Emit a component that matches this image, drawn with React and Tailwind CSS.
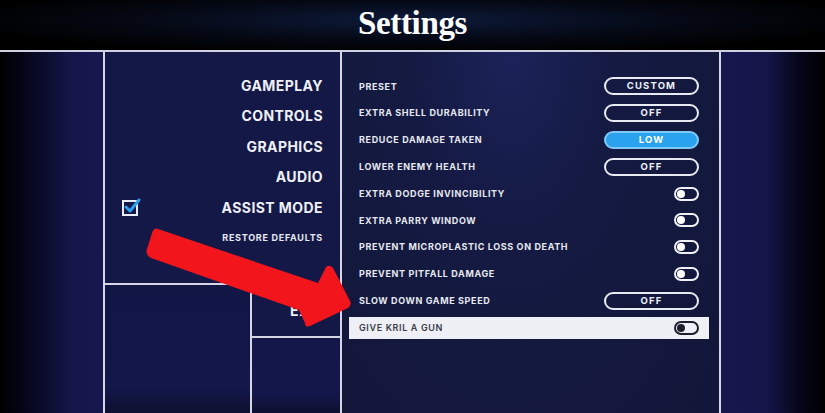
import { useState } from "react";

const rows = [
  { label: "PRESET", kind: "pill", value: "CUSTOM" },
  { label: "EXTRA SHELL DURABILITY", kind: "pill", value: "OFF" },
  { label: "REDUCE DAMAGE TAKEN", kind: "pill", value: "LOW", active: true },
  { label: "LOWER ENEMY HEALTH", kind: "pill", value: "OFF" },
  { label: "EXTRA DODGE INVINCIBILITY", kind: "toggle" },
  { label: "EXTRA PARRY WINDOW", kind: "toggle" },
  { label: "PREVENT MICROPLASTIC LOSS ON DEATH", kind: "toggle" },
  { label: "PREVENT PITFALL DAMAGE", kind: "toggle" },
  { label: "SLOW DOWN GAME SPEED", kind: "pill", value: "OFF" },
  { label: "GIVE KRIL A GUN", kind: "toggle", selected: true },
];

const menu = ["GAMEPLAY", "CONTROLS", "GRAPHICS", "AUDIO", "ASSIST MODE"];

const Pill = ({ value, active }) => (
  <div
    className={
      active
        ? "w-[95px] h-[18px] rounded-full border-2 border-[#7fcaf8] bg-[#2aa2ee] flex items-center justify-center text-[9.5px] font-bold tracking-[0.12em] text-white"
        : "w-[95px] h-[18px] rounded-full border-2 border-[#e9ebf2] flex items-center justify-center text-[9.5px] font-bold tracking-[0.12em] text-[#eef0f6]"
    }
  >
    {value}
  </div>
);

const Toggle = ({ dark }) => (
  <div
    className={
      dark
        ? "w-[25px] h-[14px] rounded-full border-2 border-[#1c1f2c] flex items-center px-[1px]"
        : "w-[25px] h-[14px] rounded-full border-2 border-[#eef0f6] flex items-center px-[1px]"
    }
  >
    <div className={dark ? "w-[8px] h-[8px] rounded-full bg-[#1c1f2c]" : "w-[8px] h-[8px] rounded-full bg-white"} />
  </div>
);

const CheckBox = () => (
  <svg width="22" height="22" viewBox="0 0 22 22">
    <rect x="3" y="5" width="14" height="14" fill="none" stroke="#e8ecf6" strokeWidth="2" />
    <path d="M6 11 L10 15 L19 4" fill="none" stroke="#2b9ff0" strokeWidth="3" strokeLinecap="round" strokeLinejoin="round" />
  </svg>
);

const Arrow = () => (
  <svg className="absolute left-0 top-0 pointer-events-none" width="825" height="413" viewBox="0 0 825 413">
    <path
      d="M158 229 L318 283 L326 267 Q330 264 333 268 L350 301 Q352 305 348 308 L310 326 Q305 328 305 323 L299 310 L151 258 Q145 255 147 249 L152 233 Q154 227 158 229 Z"
      fill="#f2151b"
    />
  </svg>
);

export default function App() {
  const [assist] = useState(true);

  return (
    <div className="relative w-[825px] h-[413px] overflow-hidden bg-black flex flex-col font-['Inter',sans-serif]">
      <header className="h-[52px] shrink-0 border-b-2 border-[#cfd1e0] flex items-center justify-center bg-[radial-gradient(ellipse_at_50%_40%,#0d1a3a_0%,#050915_45%,#000_80%)]">
        <h1 className="text-white text-[33px] font-bold leading-none -mt-[4px] font-['Liberation_Serif',serif] tracking-[-0.01em]">
          Settings
        </h1>
      </header>

      <div className="flex flex-1 min-h-0">
        <div className="w-[103px] bg-[linear-gradient(90deg,#000_0%,#05061a_25%,#14164a_70%,#16184f_100%)]" />

        <div className="w-[239px] border-x-2 border-[#d5d7e6] bg-[#141846] flex flex-col">
          <div className="h-[231px] pt-[18px] pr-[17px] flex flex-col">
            {menu.map((item) => (
              <div key={item} className="h-[30.5px] flex items-center justify-between">
                <div className="pl-[15px]">{item === "ASSIST MODE" && assist ? <CheckBox /> : null}</div>
                <span className="text-[14px] font-bold tracking-[0.03em] text-[#eef0f7]">{item}</span>
              </div>
            ))}
            <div className="h-[30.5px] flex items-center justify-end">
              <span className="text-[9px] font-bold tracking-[0.08em] text-[#e6e8f2]">RESTORE DEFAULTS</span>
            </div>
          </div>
          <div className="flex-1 border-t-2 border-[#d5d7e6] flex">
            <div className="w-[147px] border-r-2 border-[#d5d7e6] bg-[linear-gradient(180deg,#121645_0%,#131749_80%,#0d1030_100%)]" />
            <div className="flex-1 flex flex-col">
              <div className="h-[53px] border-b-2 border-[#d5d7e6] flex items-center pl-[38px]">
                <span className="text-[14px] font-bold tracking-[0.06em] text-[#eef0f7]">EXIT</span>
              </div>
              <div className="flex-1 bg-[linear-gradient(180deg,#131749_0%,#131749_75%,#0d1030_100%)]" />
            </div>
          </div>
        </div>

        <div className="w-[379px] border-r-2 border-[#d5d7e6] bg-[radial-gradient(ellipse_at_45%_0%,#1c2258_0%,#141a42_35%,#121638_100%)]">
          <div className="pt-[21px] ml-[7px] mr-[10px] flex flex-col">
            {rows.map((row) => (
              <div
                key={row.label}
                className={
                  row.selected
                    ? "h-[22px] my-[2.4px] flex items-center justify-between px-[10px] bg-[#eef0f5]"
                    : "h-[26.8px] flex items-center justify-between px-[10px]"
                }
              >
                <span
                  className={
                    row.selected
                      ? "text-[9px] font-semibold tracking-[0.07em] text-[#3a3d48]"
                      : "text-[9px] font-bold tracking-[0.07em] text-[#e6e8f0]"
                  }
                >
                  {row.label}
                </span>
                {row.kind === "pill" ? <Pill value={row.value} active={row.active} /> : <Toggle dark={row.selected} />}
              </div>
            ))}
          </div>
        </div>

        <div className="flex-1 bg-[linear-gradient(90deg,#16174f_0%,#141548_45%,#05061a_75%,#000_100%)]" />
      </div>

      <Arrow />
    </div>
  );
}
